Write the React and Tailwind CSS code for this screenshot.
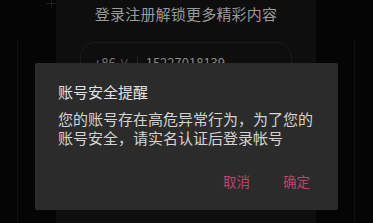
export default function App() {
  const font = { fontFamily: '"Noto Sans CJK SC", "Noto Sans", sans-serif' };

  return (
    <div
      className="relative w-[373px] h-[223px] overflow-hidden bg-[#050505]"
      style={font}
    >
      {/* page behind the dialog */}
      <div className="flex h-full">
        <div className="w-[17px]" />
        <div className="w-px mt-[40px] bg-[#121212]" />
        <div className="w-[38px]" />
        <div className="w-[260px] h-full bg-[#0e0e0e] flex flex-col">
          <div className="pt-[4px] text-center text-[15px] leading-[20px] text-[#9b9b9b] tracking-[0.2px]">
            登录注册解锁更多精彩内容
          </div>
          <div className="mt-[18px] mx-[24px] h-[42px] rounded-[15px] border border-[#1b1b1b] flex items-center pl-[13px] text-[13px] text-[#7a7a7a]">
            <span>+86</span>
            <span className="ml-[4px] text-[9px]">∨</span>
            <div className="ml-[8px] w-px h-[16px] bg-[#222]" />
            <span className="ml-[8px] text-[#8a8a8a]">15227018139</span>
          </div>
        </div>
        <div className="w-[38px]" />
        <div className="w-px mt-[40px] bg-[#121212]" />
      </div>

      {/* faint close mark at top left of the page, cut by the top edge */}
      <div className="absolute left-[46px] top-[-3px] w-[11px] h-[11px]">
        <div className="absolute left-[5px] top-0 w-px h-full bg-[#1e1e1e]" />
        <div className="absolute left-0 top-[6px] w-full h-px bg-[#1e1e1e]" />
      </div>

      {/* dialog */}
      <div className="absolute left-[35px] top-[63px] w-[303px] h-[147px] bg-[#2b2b2b] rounded-[2px] flex flex-col">
        <div className="pt-[19px] pl-[23px] text-[15px] leading-[20px] text-[#e2e2e2]">
          账号安全提醒
        </div>
        <div className="mt-[7px] pl-[23px] pr-[20px] text-[15px] leading-[19px] text-[#d4d4d4]">
          您的账号存在高危异常行为，为了您的
          <br />
          账号安全，请实名认证后登录帐号
        </div>
        <div className="mt-auto mb-[20px] flex justify-end pr-[28px] gap-[33px] text-[13.5px] leading-[18px] text-[#bc446c]">
          <span>取消</span>
          <span>确定</span>
        </div>
      </div>
    </div>
  );
}
